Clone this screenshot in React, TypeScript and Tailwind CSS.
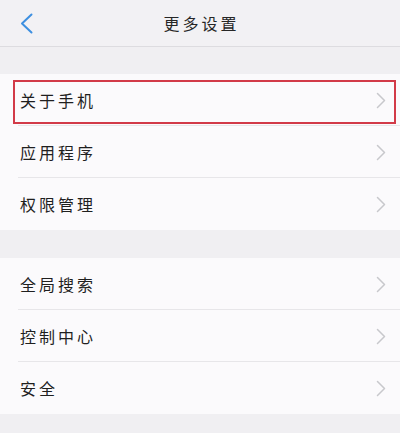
import React from "react";

const font = { fontFamily: '"Noto Sans CJK SC", "Noto Sans", sans-serif' };

function Chevron() {
  return (
    <svg width="10" height="17" viewBox="0 0 10 17" fill="none" className="shrink-0">
      <path d="M1.5 1.5 L8.5 8.5 L1.5 15.5" stroke="#c8c8cc" strokeWidth="1.5" strokeLinecap="round" strokeLinejoin="round" />
    </svg>
  );
}

function Row({ label, last, highlight }: { label: string; last?: boolean; highlight?: boolean }) {
  return (
    <div className="relative h-[52px] flex items-center pl-[20px] pr-[14px]">
      <span className="flex-1 text-[16px] tracking-[3px] text-[#1f1f1f] leading-none">{label}</span>
      <Chevron />
      {!last && <div className="absolute left-[18px] right-0 bottom-0 h-px bg-[#e7e6e9]" />}
      {highlight && (
        <div className="absolute left-[13px] right-[4px] top-[6px] bottom-[2px] border-2 border-[#d23a48]" />
      )}
    </div>
  );
}

export default function App() {
  return (
    <div className="w-[400px] h-[433px] bg-[#f0eff2] overflow-hidden" style={font}>
      <div className="h-[47px] bg-[#f2f1f4] border-b border-[#dddce0] grid grid-cols-[1fr_auto_1fr] items-center">
        <div className="pl-[20px] flex items-center">
          <svg width="14" height="21" viewBox="0 0 14 21" fill="none">
            <path d="M11.5 1.5 L2 10.5 L11.5 19.5" stroke="#3d8fe0" strokeWidth="2" strokeLinecap="round" strokeLinejoin="round" />
          </svg>
        </div>
        <div className="pl-[3px] text-[16px] tracking-[3px] text-[#262626] leading-none">更多设置</div>
        <div />
      </div>
      <div className="h-[27px]" />
      <div className="bg-[#fbfafc]">
        <Row label="关于手机" highlight />
        <Row label="应用程序" />
        <Row label="权限管理" last />
      </div>
      <div className="h-[28px]" />
      <div className="bg-[#fbfafc]">
        <Row label="全局搜索" />
        <Row label="控制中心" />
        <Row label="安全" last />
      </div>
    </div>
  );
}
